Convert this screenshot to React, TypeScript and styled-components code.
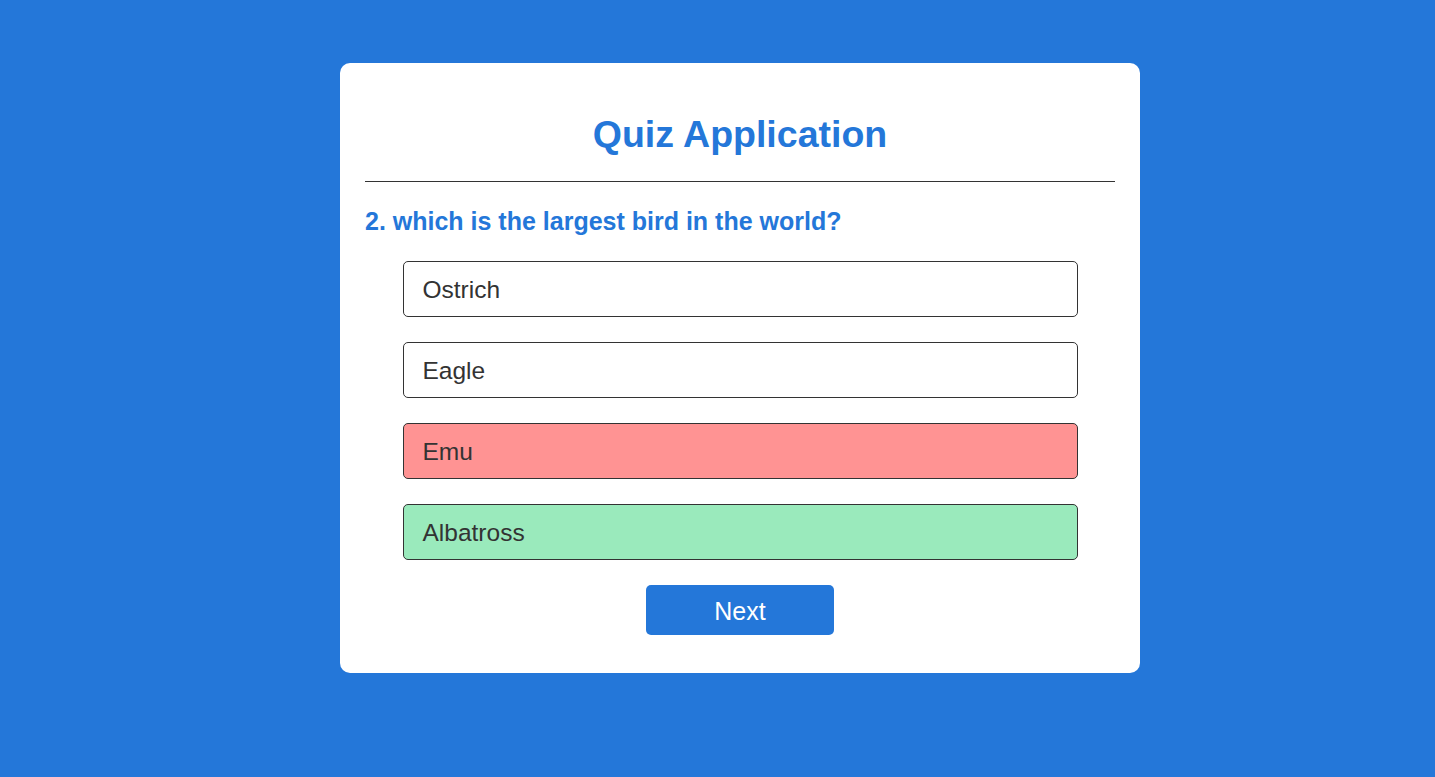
import React, { useState } from "react";
import styled, { createGlobalStyle } from "styled-components";

const GlobalStyle = createGlobalStyle`
  * {
    box-sizing: border-box;
  }
  body {
    margin: 0;
    background: #2477d9;
    font-family: "Liberation Sans", Arial, sans-serif;
  }
`;

type Status = "none" | "wrong" | "right";

interface Option {
  label: string;
  status: Status;
}

const question = "2. which is the largest bird in the world?";

const initialOptions: Option[] = [
  { label: "Ostrich", status: "none" },
  { label: "Eagle", status: "none" },
  { label: "Emu", status: "wrong" },
  { label: "Albatross", status: "right" },
];

const App: React.FC = () => {
  const [options] = useState<Option[]>(initialOptions);

  return (
    <Page>
      <GlobalStyle />
      <Card>
        <Title>Quiz Application</Title>
        <Divider />
        <Question>{question}</Question>
        <OptionList>
          {options.map((opt) => (
            <OptionItem key={opt.label} $status={opt.status}>
              {opt.label}
            </OptionItem>
          ))}
        </OptionList>
        <NextButton>Next</NextButton>
      </Card>
    </Page>
  );
};

const Page = styled.div`
  min-height: 100vh;
  padding: 63px 0 0 340px;
`;

const Card = styled.div`
  width: 800px;
  background: #fff;
  border-radius: 10px;
  padding: 38px 25px;
  display: flex;
  flex-direction: column;
`;

const Title = styled.h1`
  margin: 12px 0 0;
  text-align: center;
  color: #2477d9;
  font-size: 37.5px;
  line-height: 42px;
  font-weight: 700;
`;

const Divider = styled.hr`
  margin: 26px 0 0;
  border: none;
  height: 1px;
  background: #333;
`;

const Question = styled.h2`
  margin: 25px 0 0;
  color: #2477d9;
  font-size: 25px;
  line-height: 29px;
  font-weight: 700;
`;

const bg: Record<Status, string> = {
  none: "#fff",
  wrong: "#ff9393",
  right: "#9aeabc",
};

const OptionList = styled.ul`
  list-style: none;
  margin: 25px auto 0;
  padding: 0;
  width: 90%;
  display: flex;
  flex-direction: column;
  gap: 25px;
`;

const OptionItem = styled.li<{ $status: Status }>`
  height: 56px;
  display: flex;
  align-items: center;
  padding: 1px 19px 0;
  border: 1px solid #333;
  border-radius: 5px;
  background: ${(p) => bg[p.$status]};
  color: #333;
  font-size: 24.5px;
  cursor: pointer;
`;

const NextButton = styled.button`
  align-self: center;
  margin-top: 25px;
  width: 188px;
  height: 50px;
  border: none;
  border-radius: 5px;
  background: #2477d9;
  color: #fff;
  font-family: "Liberation Sans", Arial, sans-serif;
  font-size: 25px;
  font-weight: 500;
  padding: 2px 0 0;
  cursor: pointer;
`;

export default App;
